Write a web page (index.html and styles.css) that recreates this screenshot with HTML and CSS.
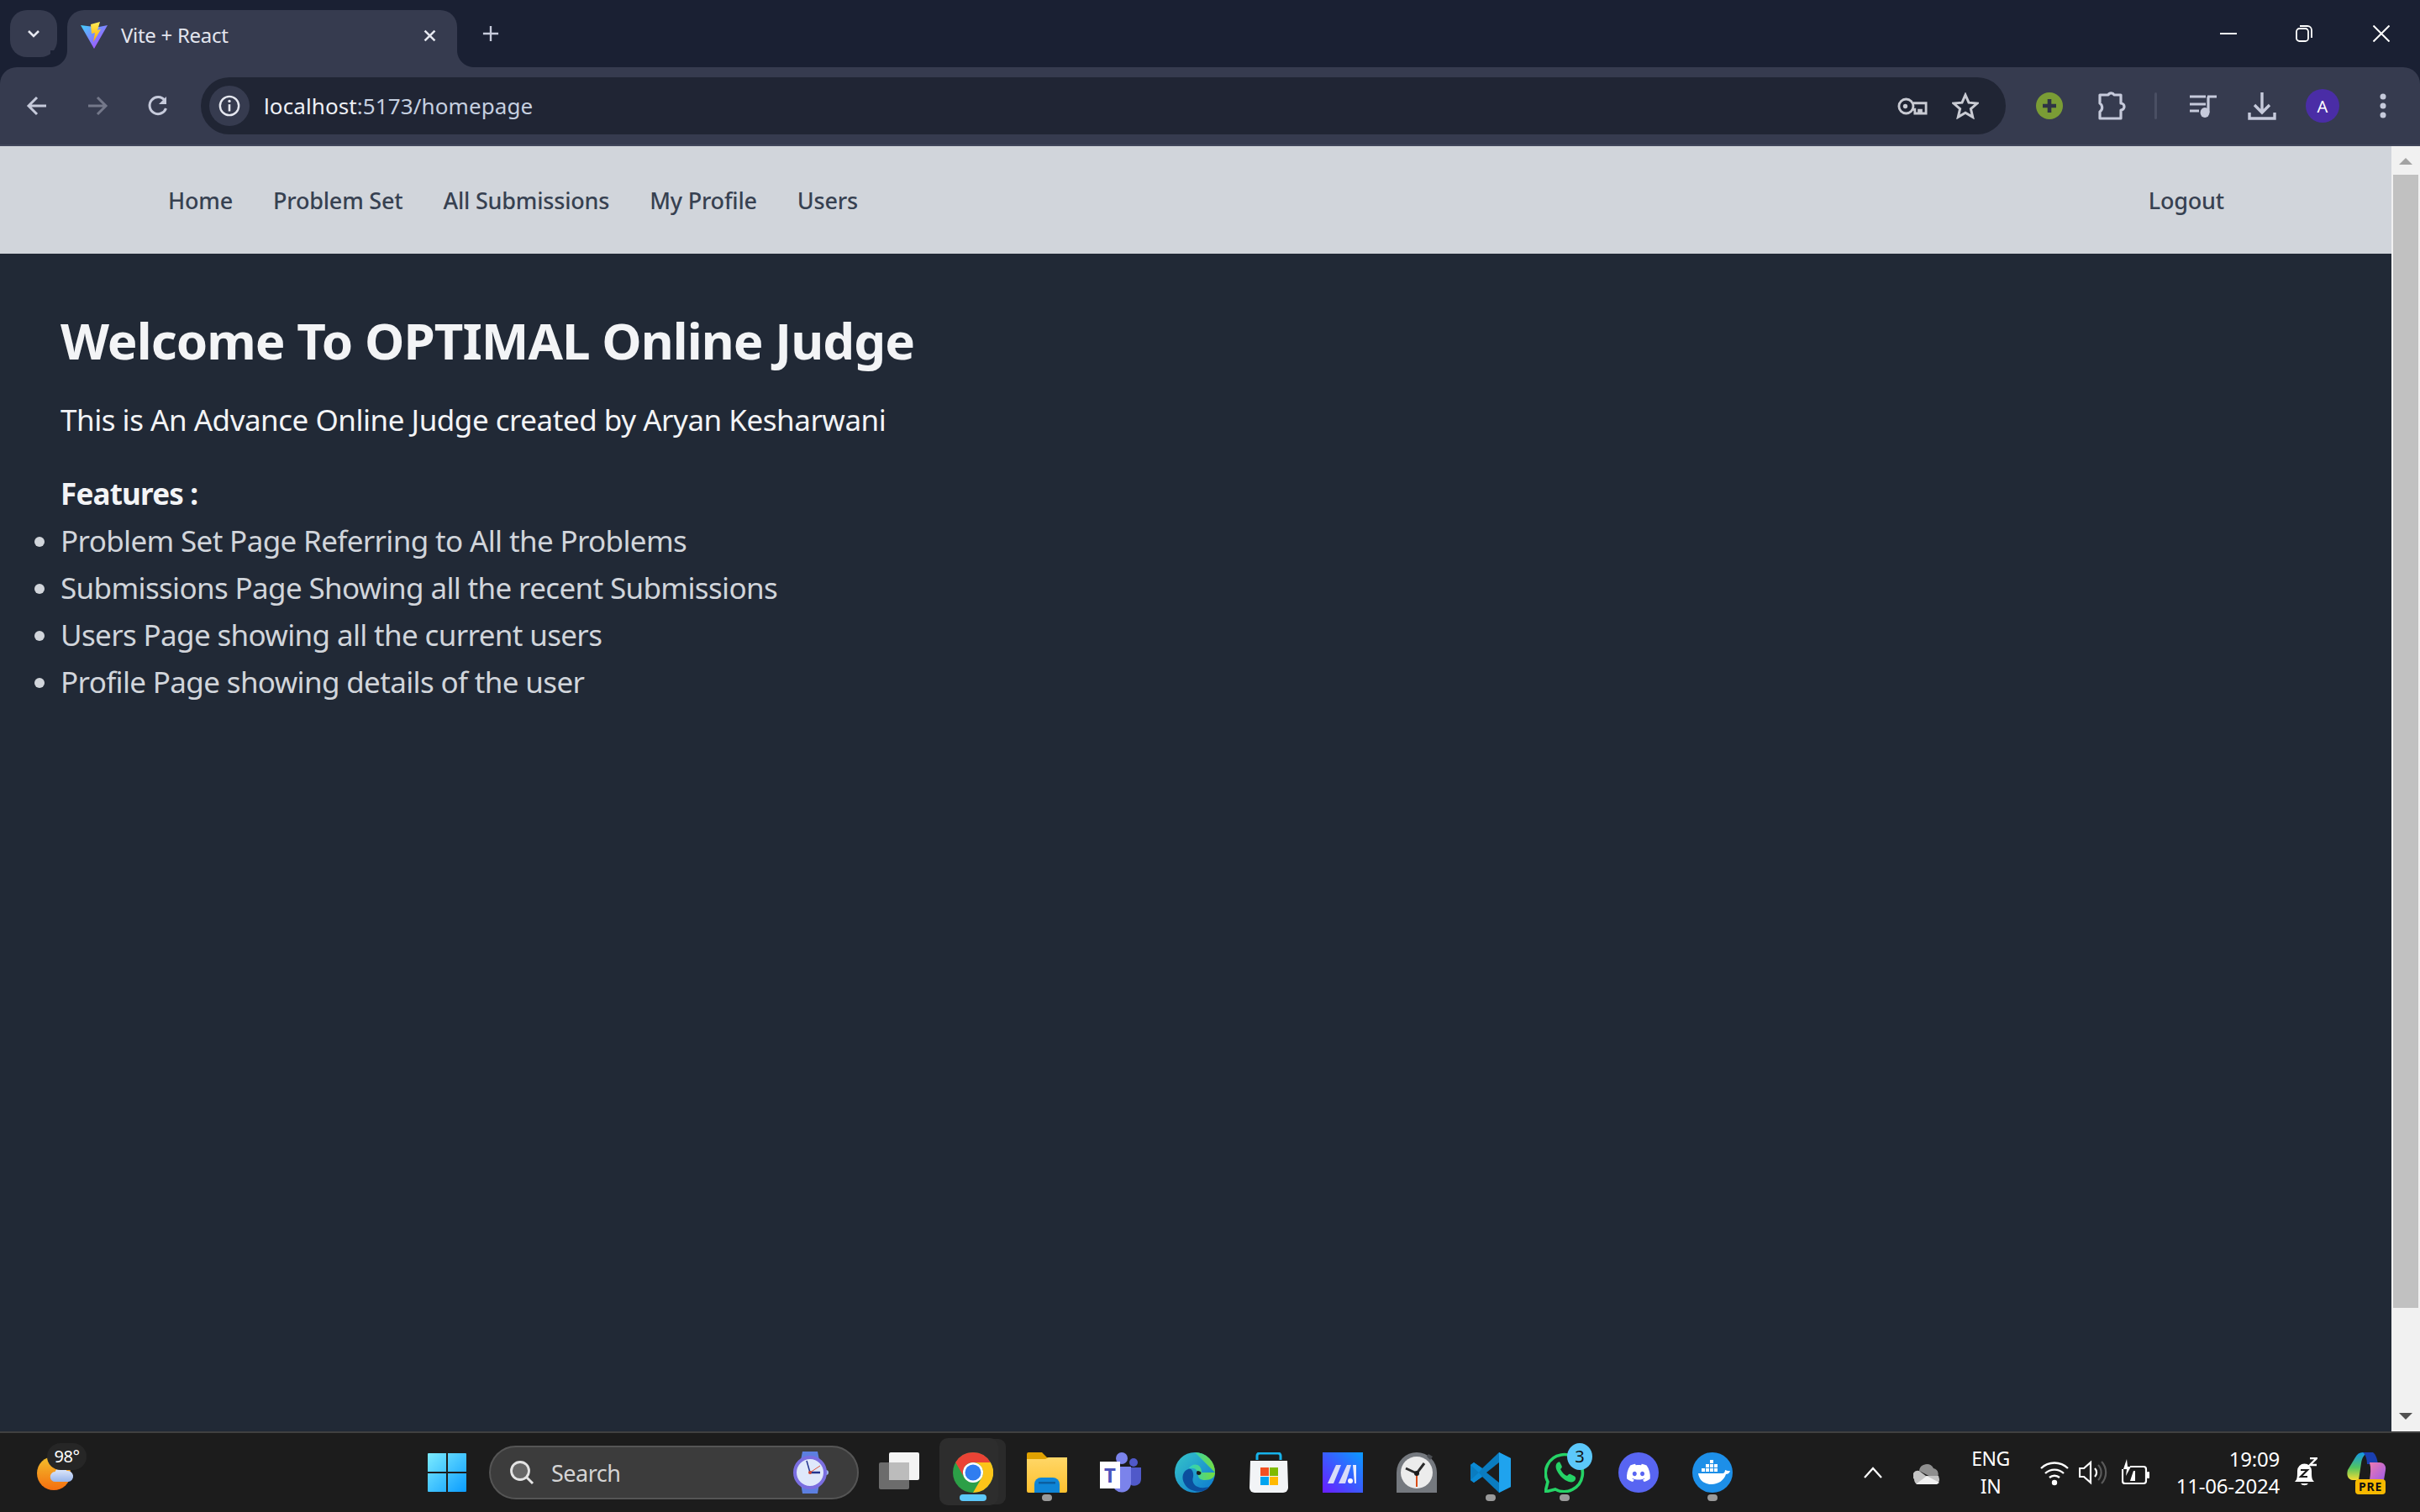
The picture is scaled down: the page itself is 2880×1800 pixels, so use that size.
FILE: index.html
```html
<!DOCTYPE html>
<html lang="en">
<head>
<meta charset="utf-8">
<title>Vite + React</title>
<link rel="stylesheet" href="styles.css">
</head>
<body>
<div class="screen">
  <header class="titlebar">
    <button class="tab-list"><svg class="ic20" viewBox="0 0 20 20"><path d="M4 7l6 6 6-6" fill="none" stroke="#e6e8f0" stroke-width="2.6"/></svg></button>
    <div class="tab">
      <svg class="favicon" viewBox="0 0 32 32">
        <defs>
          <linearGradient id="vt1" x1="0" y1="0" x2="1" y2="1"><stop offset="0" stop-color="#41d1ff"/><stop offset="1" stop-color="#bd34fe"/></linearGradient>
          <linearGradient id="vt2" x1="0" y1="0" x2="0" y2="1"><stop offset="0" stop-color="#ffee58"/><stop offset="1" stop-color="#ffa800"/></linearGradient>
        </defs>
        <path d="M0 4l16 28L32 4l-10 2-6 0z" fill="url(#vt1)"/>
        <path d="M12 3l11-3-3 10 4-1-9 15 2-11-4 1z" fill="url(#vt2)"/>
      </svg>
      <span class="tab-title">Vite + React</span>
      <svg class="tab-close" viewBox="0 0 20 20"><path d="M3 3l14 14M17 3L3 17" stroke="#e6e8f0" stroke-width="3"/></svg>
    </div>
    <svg class="new-tab" viewBox="0 0 22 22"><path d="M11 1v20M1 11h20" stroke="#c6cadb" stroke-width="2.6"/></svg>
    <div class="win-controls">
      <svg class="win-min" viewBox="0 0 20 20"><path d="M0 10h20" stroke="#fff" stroke-width="2"/></svg>
      <svg class="win-restore" viewBox="0 0 20 20"><rect x="1" y="4" width="14" height="15" rx="3.500" fill="none" stroke="#fff" stroke-width="1.800"/><path d="M5 1h9a5 5 0 0 1 5 5v9" fill="none" stroke="#fff" stroke-width="1.800"/></svg>
      <svg class="win-close" viewBox="0 0 20 20"><path d="M0.500 0.500l19 19M19.500 0.500l-19 19" stroke="#fff" stroke-width="2"/></svg>
    </div>
  </header>

  <div class="toolbar">
    <svg class="nav-ic" viewBox="0 0 26 26"><path d="M24 13H4M13 3L3 13l10 10" fill="none" stroke="#c6cadb" stroke-width="3"/></svg>
    <svg class="nav-ic" viewBox="0 0 26 26"><path d="M2 13h20M13 3l10 10-10 10" fill="none" stroke="#74788a" stroke-width="3"/></svg>
    <svg class="nav-ic" viewBox="0 0 26 26"><path d="M22.5 16a10 10 0 1 1-1.5-9.500" fill="none" stroke="#c6cadb" stroke-width="3"/><path d="M23 2v9h-9z" fill="#c6cadb"/></svg>
    <div class="omnibox">
      <span class="info-chip"><svg class="ic28" viewBox="0 0 28 28"><circle cx="14" cy="14" r="12" fill="none" stroke="#e6e8f0" stroke-width="2.6"/><path d="M14 12v9" stroke="#e6e8f0" stroke-width="2.8"/><circle cx="14" cy="8" r="1.8" fill="#e6e8f0"/></svg></span>
      <span class="url">localhost<span class="url-dim">:5173/homepage</span></span>
      <svg class="key-ic" viewBox="0 0 38 24"><circle cx="11" cy="12" r="9" fill="none" stroke="#c9cbd3" stroke-width="3"/><circle cx="10" cy="12" r="2.800" fill="#c9cbd3"/><path d="M20 8h16v13h-6v-4h-3v4h-5v-5h-3" fill="none" stroke="#c9cbd3" stroke-width="3"/></svg>
      <svg class="star-ic" viewBox="0 0 32 32"><path d="M16 3l4 9.200 10 .9-7.600 6.500 2.300 9.800L16 24.200 7.300 29.400l2.300-9.800L2 13.100l10-.9z" fill="none" stroke="#c9cbd3" stroke-width="3"/></svg>
    </div>
    <div class="tools">
      <svg class="tool" viewBox="0 0 32 44"><circle cx="16" cy="22" r="16" fill="#7a9c35"/><path d="M16 14v16M8 22h16" stroke="#2f3445" stroke-width="4.600"/></svg>
      <svg class="tool" viewBox="0 0 36 44"><path d="M3 9h10a4 4 0 0 1 7 0h8v10a4 4 0 0 1 0 8v10H3V29a6 6 0 0 0 0-10z" fill="none" stroke="#c6cadb" stroke-width="3.200" stroke-linejoin="round"/></svg>
      <span class="tool-sep"></span>
      <svg class="tool" viewBox="0 0 34 44"><path d="M1 11h19M1 20h19M1 28h11" stroke="#c6cadb" stroke-width="3.200"/><path d="M22 11h11M23 11v19" stroke="#c6cadb" stroke-width="3.200"/><ellipse cx="19" cy="30" rx="5.500" ry="6" fill="#c6cadb"/></svg>
      <svg class="tool" viewBox="0 0 34 44"><path d="M17 6v24M8 21l9 9 9-9" fill="none" stroke="#c6cadb" stroke-width="3.400"/><path d="M2 30v7h30v-7" fill="none" stroke="#c6cadb" stroke-width="3.400"/></svg>
      <span class="avatar">A</span>
      <svg class="kebab" viewBox="0 0 8 32"><circle cx="4" cy="5" r="3.500" fill="#c6cadb"/><circle cx="4" cy="16" r="3.500" fill="#c6cadb"/><circle cx="4" cy="27" r="3.500" fill="#c6cadb"/></svg>
    </div>
  </div>

  <div class="viewport">
    <div class="page">
      <nav class="navbar">
        <a class="nav-link">Home</a>
        <a class="nav-link">Problem Set</a>
        <a class="nav-link">All Submissions</a>
        <a class="nav-link">My Profile</a>
        <a class="nav-link">Users</a>
        <a class="nav-link logout">Logout</a>
      </nav>
      <main class="content">
        <h1 class="headline">Welcome To OPTIMAL Online Judge</h1>
        <p class="lead">This is An Advance Online Judge created by Aryan Kesharwani</p>
        <p class="features">Features :</p>
        <ul class="feature-list">
          <li>Problem Set Page Referring to All the Problems</li>
          <li>Submissions Page Showing all the recent Submissions</li>
          <li>Users Page showing all the current users</li>
          <li>Profile Page showing details of the user</li>
        </ul>
      </main>
    </div>
    <div class="scrollbar">
      <svg class="sb-arrow" viewBox="0 0 16 8"><path d="M8 0l8 8H0z" fill="#a3a3a3"/></svg>
      <div class="sb-thumb"></div>
      <svg class="sb-arrow sb-down" viewBox="0 0 16 8"><path d="M0 0h16L8 8z" fill="#505050"/></svg>
    </div>
  </div>

  <footer class="taskbar">
    <div class="weather">
      <svg class="weather-ic" viewBox="0 0 44 40">
        <defs><linearGradient id="wx" x1="0" y1="0" x2="0" y2="1"><stop offset="0" stop-color="#f2c02c"/><stop offset="1" stop-color="#f56e0f"/></linearGradient>
        <linearGradient id="wc" x1="0" y1="0" x2="0" y2="1"><stop offset="0" stop-color="#e8eefc"/><stop offset="1" stop-color="#98b5ea"/></linearGradient></defs>
        <circle cx="20" cy="20" r="20" fill="url(#wx)"/>
        <path d="M22 30a6 6 0 0 1-.500-12 8 8 0 0 1 14-1 6.500 6.500 0 0 1 2 13z" fill="url(#wc)"/>
      </svg>
      <span class="temp">98°</span>
    </div>
    <div class="app">
      <svg class="ic46" viewBox="0 0 46 46">
        <defs><linearGradient id="wn" x1="0" y1="0" x2="1" y2="1"><stop offset="0" stop-color="#7cecff"/><stop offset="1" stop-color="#0a9cff"/></linearGradient></defs>
        <path d="M1 0h21v22H0V1a1 1 0 0 1 1-1zM24 0h21a1 1 0 0 1 1 1v21H24zM0 24h22v22H1a1 1 0 0 1-1-1zM24 24h22v21a1 1 0 0 1-1 1H24z" fill="url(#wn)"/>
      </svg>
    </div>
    <div class="search">
      <svg class="search-ic" viewBox="0 0 30 30"><circle cx="13" cy="13" r="10.500" fill="#666" stroke="#e4e4e4" stroke-width="2.800"/><path d="M20 20l8 8" stroke="#e4e4e4" stroke-width="3"/></svg>
      <span class="search-text">Search</span>
      <svg class="watch" viewBox="0 0 42 50">
        <path d="M11 0h18l2 10H9zM9 38h22l-2 12H11z" fill="#5c7fe0"/>
        <circle cx="39" cy="25" r="3" fill="#9fb3e8"/>
        <circle cx="20" cy="25" r="18" fill="#dfe8fb" stroke="#7a6ee0" stroke-width="4"/>
        <path d="M20 25l-4-14" stroke="#23348f" stroke-width="1.500"/><path d="M20 25h12" stroke="#23348f" stroke-width="2.500"/><path d="M20 25l12-8" stroke="#e0583c" stroke-width="1"/>
        <circle cx="20" cy="25" r="2" fill="#c43"/>
      </svg>
    </div>
    <div class="app">
      <svg class="ic48" viewBox="0 0 48 48">
        <rect x="12" y="0" width="36" height="33" rx="2" fill="#f4f4f4"/>
        <rect x="0" y="12" width="36" height="32" rx="2" fill="#6c6c6c"/>
        <rect x="12" y="12" width="24" height="21" fill="#bcbcbc"/>
      </svg>
    </div>
    <div class="app app-active">
      <svg class="ic48" viewBox="0 0 48 48">
        <circle cx="24" cy="24" r="24" fill="#2c9f47"/>
        <path d="M24 0A24 24 0 0 1 44.800 12H24A12 12 0 0 0 13.600 30L3.200 12A24 24 0 0 1 24 0Z" fill="#ea4335"/>
        <path d="M44.800 12A24 24 0 0 1 24 48L34.400 30A12 12 0 0 0 24 12Z" fill="#fcc419"/>
        <circle cx="24" cy="24" r="12" fill="#fff"/>
        <circle cx="24" cy="24" r="9.500" fill="#2f7df0"/>
      </svg>
      <span class="indicator"></span>
    </div>
    <div class="app">
      <svg class="ic48" viewBox="0 0 48 48">
        <defs><linearGradient id="fd" x1="0" y1="0" x2="0" y2="1"><stop offset="0" stop-color="#ffd767"/><stop offset="1" stop-color="#fdc02f"/></linearGradient></defs>
        <path d="M0 2a2 2 0 0 1 2-2h16l6 6h24v10H0z" fill="#dfa100"/>
        <path d="M0 8h22l4-2h22v40a2 2 0 0 1-2 2H2a2 2 0 0 1-2-2z" fill="url(#fd)"/>
        <path d="M9 48V38a8 8 0 0 1 8-8h14a8 8 0 0 1 8 8v10z" fill="#0f85d6"/>
        <rect x="14" y="35" width="20" height="2.500" fill="#0b5fa0"/>
      </svg>
      <span class="dot"></span>
    </div>
    <div class="app">
      <svg class="ic48" viewBox="0 0 48 48">
        <circle cx="25" cy="7" r="7" fill="#7b83eb"/><circle cx="39" cy="12" r="5" fill="#5059c9"/>
        <path d="M33 18h15v14a8 8 0 0 1-13 6z" fill="#5059c9"/>
        <path d="M14 17h22v19a11 11 0 0 1-22 1z" fill="#7b83eb"/>
      </svg>
      <span class="teams-t">T</span>
    </div>
    <div class="app">
      <svg class="ic48" viewBox="0 0 48 48">
        <defs><linearGradient id="eg" x1="0" y1="0" x2="1" y2="1"><stop offset="0" stop-color="#36c5c9"/><stop offset="1" stop-color="#0c78d0"/></linearGradient>
        <linearGradient id="eg2" x1="0" y1="0" x2="1" y2="0"><stop offset="0" stop-color="#2ad0c5"/><stop offset="1" stop-color="#74dc3e"/></linearGradient></defs>
        <circle cx="24" cy="24" r="24" fill="url(#eg)"/>
        <path d="M24 0a24 24 0 0 1 24 24c0 6-5 9-12 9-4 0-8-2-8-5 0-8-6-11-12-8C20 12 32 12 32 24H48" fill="url(#eg2)"/>
        <path d="M16 20c-6 2-9 10-4 18 4 7 14 10 22 8 3-1 6-3 7-5-14 4-22-3-19-12 1-5-2-11-6-9z" fill="#0b4f9e"/>
        <path d="M27 22c5 0 6 4 2 5-2 0-3-1-3-2s0-2 1-3z" fill="#1c1c1c"/>
      </svg>
    </div>
    <div class="app">
      <svg class="ic48" viewBox="0 0 48 48">
        <path d="M10 9V4a3 3 0 0 1 3-3h22a3 3 0 0 1 3 3v5" fill="none" stroke="#16b2ea" stroke-width="3"/>
        <path d="M2 10h44l1 32a6 6 0 0 1-6 6H7a6 6 0 0 1-6-6z" fill="#f2f4f6"/>
        <rect x="14" y="18" width="10" height="10" fill="#f25022"/><rect x="25" y="18" width="10" height="10" fill="#7fba00"/>
        <rect x="14" y="29" width="10" height="10" fill="#00a4ef"/><rect x="25" y="29" width="10" height="10" fill="#ffb900"/>
      </svg>
    </div>
    <div class="app">
      <svg class="ic48" viewBox="0 0 48 48">
        <defs><linearGradient id="mp" x1="1" y1="0" x2="0" y2="1"><stop offset="0" stop-color="#0a9bff"/><stop offset="1" stop-color="#6a1cff"/></linearGradient></defs>
        <rect width="48" height="48" fill="url(#mp)"/>
        <path d="M6 37l10-22h6L13 37zM19 37l10-22h5L27 37z" fill="#d8dcf8"/>
        <path d="M36 15h4v22h-2z" fill="#e8ecff"/><circle cx="33" cy="34" r="3" fill="#fff"/>
      </svg>
    </div>
    <div class="app">
      <svg class="ic48" viewBox="0 0 48 48">
        <path d="M0 48V24a24 24 0 0 1 48 0v24z" fill="#75797f"/>
        <path d="M38 2l5 3-3 4-4-4z" fill="#4a4d52"/>
        <circle cx="24" cy="24" r="19" fill="#ececec"/>
        <path d="M11 19l13 6 9-12" fill="none" stroke="#2b2b2b" stroke-width="3"/>
        <path d="M24 25v16" stroke="#d83b01" stroke-width="1.800"/>
        <circle cx="24" cy="25" r="3" fill="#1b1b1b"/>
      </svg>
    </div>
    <div class="app">
      <svg class="ic48" viewBox="0 0 48 48">
        <path d="M34 0l14 7v34l-14 7-20-19L4 36 0 33V15l4-3 10 7z" fill="#0a7cc0"/>
        <path d="M34 0l14 7v34l-14 7z" fill="#1fa3ee"/>
        <path d="M34 12L19 24l15 12z" fill="#1c1c1c"/>
        <path d="M0 15l4-3 10 7-4 5zM0 33l4 3 10-7-4-5z" fill="#0b8ad4"/>
      </svg>
      <span class="dot"></span>
    </div>
    <div class="app">
      <svg class="ic48" viewBox="0 0 48 48">
        <path d="M1 47l3-12A22 22 0 1 1 13 44z" fill="none" stroke="#25d366" stroke-width="3.600"/>
        <path d="M16 12c-3 2-3 6-1 10 3 6 8 11 14 13 4 1 7 0 8-3 .500-2 0-3-2-4l-4-2c-1-.500-2 0-3 1l-1 1c-3-1-6-4-8-8l1-1c1-1 1-2 .500-3l-2-4c-.500-1-1-1-2.500 0z" fill="#25d366"/>
      </svg>
      <span class="badge">3</span>
      <span class="dot"></span>
    </div>
    <div class="app">
      <svg class="ic48" viewBox="0 0 48 48">
        <circle cx="24" cy="24" r="24" fill="#5865f2"/>
        <g transform="translate(10 10.500) scale(1.160)"><path fill="#fff" d="M20.317 4.3698a19.7913 19.7913 0 00-4.8851-1.5152.0741.0741 0 00-.0785.0371c-.211.3753-.4447.8648-.6083 1.2495-1.8447-.2762-3.68-.2762-5.4868 0-.1636-.3933-.4058-.8742-.6177-1.2495a.077.077 0 00-.0785-.037 19.7363 19.7363 0 00-4.8852 1.515.0699.0699 0 00-.0321.0277C.5334 9.0458-.319 13.5799.0992 18.0578a.0824.0824 0 00.0312.0561c2.0528 1.5076 4.0413 2.4228 5.9929 3.0294a.0777.0777 0 00.0842-.0276c.4616-.6304.8731-1.2952 1.226-1.9942a.076.076 0 00-.0416-.1057c-.6528-.2476-1.2743-.5495-1.8722-.8923a.077.077 0 01-.0076-.1277c.1258-.0943.2517-.1923.3718-.2914a.0743.0743 0 01.0776-.0105c3.9278 1.7933 8.18 1.7933 12.0614 0a.0739.0739 0 01.0785.0095c.1202.099.246.1981.3728.2924a.077.077 0 01-.0066.1276 12.2986 12.2986 0 01-1.873.8914.0766.0766 0 00-.0407.1067c.3604.698.7719 1.3628 1.225 1.9932a.076.076 0 00.0842.0286c1.961-.6067 3.9495-1.5219 6.0023-3.0294a.077.077 0 00.0313-.0552c.5004-5.177-.8382-9.6739-3.5485-13.6604a.061.061 0 00-.0312-.0286zM8.02 15.3312c-1.1825 0-2.1569-1.0857-2.1569-2.419 0-1.3332.9555-2.4189 2.157-2.4189 1.2108 0 2.1757 1.0952 2.1568 2.419 0 1.3332-.9555 2.4189-2.1569 2.4189zm7.9748 0c-1.1825 0-2.1569-1.0857-2.1569-2.419 0-1.3332.9554-2.4189 2.1569-2.4189 1.2108 0 2.1757 1.0952 2.1568 2.419 0 1.3332-.946 2.4189-2.1568 2.4189Z"/></g>
      </svg>
    </div>
    <div class="app">
      <svg class="ic48" viewBox="0 0 48 48">
        <circle cx="24" cy="24" r="24" fill="#1d8fe8"/>
        <path d="M7 25h29c2 0 3-2 3-4 2 1 4 1 6 1-1 3-3 4-5 4-2 7-9 12-17 12-9 0-15-5-16-13z" fill="#fff"/>
        <g fill="#fff"><rect x="11" y="19" width="4" height="4"/><rect x="16" y="19" width="4" height="4"/><rect x="21" y="19" width="4" height="4"/><rect x="26" y="19" width="4" height="4"/><rect x="16" y="14" width="4" height="4"/><rect x="21" y="14" width="4" height="4"/><rect x="26" y="14" width="4" height="4"/><rect x="21" y="9" width="4" height="4"/></g>
      </svg>
      <span class="dot"></span>
    </div>
    <div class="tray">
      <svg class="tray-chev" viewBox="0 0 22 14"><path d="M1 13L11 2l10 11" fill="none" stroke="#fff" stroke-width="2.200"/></svg>
      <svg class="tray-cloud" viewBox="0 0 32 28"><path d="M7 12a9 9 0 0 1 17-3 7 7 0 0 1 2 13z" fill="#8f8f8f"/><path d="M1 22a6 6 0 0 1 6-10l8 6 15 0 1 4a6 6 0 0 1-5 6H6a6 6 0 0 1-5-6z" fill="#c4c4c4"/><path d="M3 28l13-10 15 8-3 2z" fill="#f0f0f0"/></svg>
      <div class="lang"><span>ENG</span><span>IN</span></div>
      <svg class="tray-wifi" viewBox="0 0 34 32"><path d="M1 11a23 23 0 0 1 32 0M6 17a16 16 0 0 1 22 0M11 22a9 9 0 0 1 12 0" fill="none" stroke="#fff" stroke-width="2.400"/><circle cx="17" cy="28" r="3.200" fill="#fff"/></svg>
      <svg class="tray-vol" viewBox="0 0 34 32"><path d="M1 11h5l8-7v24l-8-7H1z" fill="none" stroke="#fff" stroke-width="2.200"/><path d="M19 11a7 7 0 0 1 0 10" fill="none" stroke="#fff" stroke-width="2.200"/><path d="M23 7a13 13 0 0 1 0 18M27 3a19 19 0 0 1 0 26" fill="none" stroke="#5a5a5a" stroke-width="2.200"/></svg>
      <svg class="tray-batt" viewBox="0 0 34 32"><path d="M10 9h16a3 3 0 0 1 3 3v14a3 3 0 0 1-3 3H4a3 3 0 0 1-3-3V12" fill="none" stroke="#fff" stroke-width="2.200"/><rect x="30" y="15" width="3" height="8" rx="1" fill="#fff"/><path d="M10 26l4-12h2v12z" fill="#fff"/><path d="M6 0L2 12h4L5 20l6-11H7z" fill="#fff"/></svg>
      <div class="clock"><span>19:09</span><span>11-06-2024</span></div>
      <svg class="tray-bell" viewBox="0 0 28 36"><path d="M1 29c3-3 3-6 3-13a8.500 8.500 0 0 1 17 0c0 7 0 10 3 13z" fill="#fff"/><path d="M8 31a5 4 0 0 0 9 0z" fill="#fff"/><path d="M8 15h8l-8 8h8" fill="none" stroke="#1c1c1c" stroke-width="2.200"/><path d="M19 1h8l-8 8h8" fill="none" stroke="#fff" stroke-width="2.400"/></svg>
      <div class="copilot">
        <svg class="ic48" viewBox="0 0 48 48">
          <defs><linearGradient id="cp1" x1="0" y1="0" x2="0" y2="1"><stop offset="0" stop-color="#1297ea"/><stop offset=".55" stop-color="#52c45f"/><stop offset="1" stop-color="#f6dc33"/></linearGradient>
          <linearGradient id="cp2" x1="0" y1="0" x2="1" y2="1"><stop offset="0" stop-color="#ef7ab0"/><stop offset="1" stop-color="#9f5ce6"/></linearGradient></defs>
          <path d="M10 6c2-4 5-6 9-6h6c-4 2-7 6-8 13l-3 20H7C2 33-1 28 1 21z" fill="url(#cp1)"/>
          <path d="M19 0h12c3 2 5 7 6 14H24c0-6-2-12-5-14z" fill="#1a3fb0"/>
          <path d="M27 12h12c5 0 8 4 7 9l-2 12H27c1-7 2-14 0-21z" fill="url(#cp2)"/>
        </svg>
        <span class="pre">PRE</span>
      </div>
    </div>
  </footer>
</div>
</body>
</html>
```

FILE: styles.css
```css
* { box-sizing: border-box; }
html, body { margin: 0; padding: 0; }
body { font-family: "Noto Sans", "Open Sans", sans-serif; overflow: hidden; }
.screen { width: 2880px; height: 1800px; display: flex; flex-direction: column; background: #1a2033; }
svg { display: block; flex: none; }
.ic20 { width: 20px; height: 20px; }
.ic28 { width: 26px; height: 26px; }
.ic46 { width: 46px; height: 46px; }
.ic48 { width: 48px; height: 48px; }

/* title bar */
.titlebar { height: 80px; flex: none; display: flex; align-items: flex-start; padding: 12px 0 0 12px; background: #1a2033; }
.tab-list { width: 56px; height: 56px; border: 0; padding: 0; border-radius: 20px; background: #363b4f; display: flex; align-items: center; justify-content: center; }
.tab { width: 464px; height: 68px; margin-left: 12px; border-radius: 20px 20px 0 0; background: #363b4f; display: flex; align-items: center; padding: 0 0 8px 16px; position: relative; }
.tab::before, .tab::after { content: ""; position: absolute; bottom: 0; width: 20px; height: 20px; }
.tab::before { left: -20px; background: radial-gradient(circle at 0 0, #1a2033 19.5px, #363b4f 20.5px); }
.tab::after { right: -20px; background: radial-gradient(circle at 100% 0, #1a2033 19.5px, #363b4f 20.5px); }
.favicon { width: 32px; height: 32px; }
.tab-title { margin: 0 0 2px 16px; font-size: 24px; letter-spacing: -0.3px; color: #e3e5ee; flex: 1; }
.tab-close { width: 17px; height: 17px; margin-right: 24px; }
.new-tab { width: 20px; height: 20px; margin: 18px 0 0 30px; }
.win-controls { margin-left: auto; display: flex; align-items: center; height: 56px; }
.win-min { width: 20px; height: 20px; }
.win-restore { width: 20px; height: 20px; margin-left: 70px; }
.win-close { width: 20px; height: 20px; margin: 0 36px 0 72px; }

/* toolbar */
.toolbar { height: 94px; flex: none; display: flex; align-items: center; background: #363b4f; border-radius: 20px 20px 0 0; border-bottom: 2px solid #41465a; padding: 0 0 0 31px; }
.nav-ic { width: 26px; height: 26px; margin-right: 46px; }
.nav-ic + .omnibox { margin-left: -8px; }
.omnibox { width: 2148px; height: 68px; border-radius: 34px; background: #202534; display: flex; align-items: center; padding: 0 0 0 10px; }
.info-chip { width: 48px; height: 48px; border-radius: 50%; background: #363b4f; display: flex; align-items: center; justify-content: center; }
.url { margin-left: 17px; font-size: 26px; letter-spacing: 0.1px; color: #eef0f6; flex: 1; }
.url-dim { color: #c6d0e0; }
.key-ic { width: 36px; height: 23px; }
.star-ic { width: 32px; height: 32px; margin: 0 32px 0 29px; }
.tools { display: flex; align-items: center; }
.tool { height: 44px; width: 32px; }
.tool:nth-child(1) { margin-left: 36px; }
.tool:nth-child(2) { width: 36px; margin-left: 41px; }
.tool-sep { width: 3px; height: 32px; background: #4a4f63; border-radius: 2px; margin: 0 38px 0 32px; }
.tool:nth-child(4) { width: 34px; }
.tool:nth-child(5) { width: 34px; margin-left: 36px; }
.avatar { width: 40px; height: 40px; border-radius: 50%; background: #4a2da6; color: #fff; font-size: 20px; display: flex; align-items: center; justify-content: center; margin-left: 35px; }
.kebab { width: 8px; height: 32px; margin-left: 48px; }

/* page */
.viewport { flex: 1; display: flex; min-height: 0; background: #212936; }
.page { flex: 1; min-width: 0; }
.navbar { height: 128px; background: #d1d5db; display: flex; align-items: center; gap: 48px; padding: 0 199px 0 200px; }
.nav-link { font-size: 27px; font-weight: 500; color: #374151; letter-spacing: -0.2px; }
.logout { margin-left: auto; }
.content { padding: 66px 0 0 72px; color: #f3f4f6; }
.headline { margin: 0; font-size: 60px; line-height: 74px; font-weight: 700; letter-spacing: -0.95px; }
.lead { margin: 30px 0 0; font-size: 35px; line-height: 56px; letter-spacing: -0.48px; }
.features { margin: 32px 0 0; font-size: 35px; line-height: 56px; font-weight: 700; letter-spacing: -0.8px; }
.feature-list { margin: 0; padding: 0; list-style: disc outside; font-size: 35px; line-height: 56px; color: #d1d5db; letter-spacing: -0.65px; }
.feature-list li::marker { color: #d1d5db; }

/* scrollbar */
.scrollbar { width: 34px; flex: none; background: #f1f1f1; display: flex; flex-direction: column; align-items: center; }
.sb-arrow { width: 16px; height: 8px; margin: 14px 0 12px; }
.sb-thumb { width: 30px; height: 1349px; background: #c1c1c1; }
.sb-down { margin-top: auto; margin-bottom: 14px; }

/* taskbar */
.taskbar { height: 96px; flex: none; background: #1c1c1c; border-top: 2px solid #404040; display: flex; align-items: center; }
.weather { width: 488px; height: 94px; flex: none; position: relative; }
.weather-ic { position: absolute; left: 44px; top: 28px; width: 44px; height: 40px; }
.temp { position: absolute; left: 56px; top: 12px; width: 47px; height: 32px; border-radius: 16px; background: #262626; color: #fff; font-size: 20px; line-height: 32px; text-align: center; letter-spacing: -0.5px; }
.app { width: 88px; height: 94px; flex: none; display: flex; align-items: center; justify-content: center; position: relative; }
.app-active::before { content: ""; position: absolute; left: 4px; top: 6px; width: 70px; height: 80px; background: #2d2d2d; border-radius: 10px; box-shadow: 10px 0 0 -1px #2a2a2a; }
.app-active .ic48 { position: relative; }
.indicator { position: absolute; left: 28px; bottom: 13px; width: 32px; height: 8px; border-radius: 4px; background: #5cc8fa; }
.dot { position: absolute; left: 38px; bottom: 13px; width: 12px; height: 8px; border-radius: 4px; background: #9a9a9a; }
.teams-t { position: absolute; left: 19px; top: 34px; width: 24px; height: 32px; background: #fff; color: #4b53bc; font-size: 24px; font-weight: 700; line-height: 32px; text-align: center; }
.badge { position: absolute; left: 47px; top: 12px; width: 30px; height: 32px; border-radius: 50%; background: #5cc8fa; color: #111; font-size: 20px; line-height: 32px; text-align: center; }
.search { width: 440px; height: 64px; flex: none; margin: 0 4px 0 6px; border-radius: 32px; background: #3c3c3c; border: 2px solid #555; display: flex; align-items: center; padding: 0 16px 0 22px; }
.search-ic { width: 30px; height: 30px; }
.search-text { margin-left: 20px; font-size: 27px; color: #d4d4d4; letter-spacing: -0.5px; flex: 1; }
.watch { width: 42px; height: 50px; margin-right: 18px; }
.tray { margin-left: auto; display: flex; align-items: center; height: 94px; padding-right: 39px; }
.tray-chev { width: 22px; height: 14px; }
.tray-cloud { width: 32px; height: 28px; margin-left: 37px; }
.lang { width: 46px; margin-left: 37px; display: flex; flex-direction: column; align-items: center; font-size: 23px; line-height: 33px; color: #fff; letter-spacing: -0.5px; }
.tray-wifi { width: 34px; height: 32px; margin-left: 36px; }
.tray-vol { width: 34px; height: 32px; margin-left: 12px; }
.tray-batt { width: 34px; height: 32px; margin-left: 17px; }
.clock { width: 134px; margin-left: 20px; display: flex; flex-direction: column; align-items: flex-end; font-size: 24px; line-height: 32px; color: #fff; letter-spacing: -0.2px; }
.tray-bell { width: 28px; height: 36px; margin-left: 17px; }
.copilot { position: relative; width: 48px; height: 48px; margin-left: 35px; }
.pre { position: absolute; left: 10px; bottom: -2px; width: 36px; height: 18px; border-radius: 4px; background: #f7b900; color: #111; font-size: 14px; font-weight: 700; line-height: 18px; text-align: center; letter-spacing: 0.8px; }
```
